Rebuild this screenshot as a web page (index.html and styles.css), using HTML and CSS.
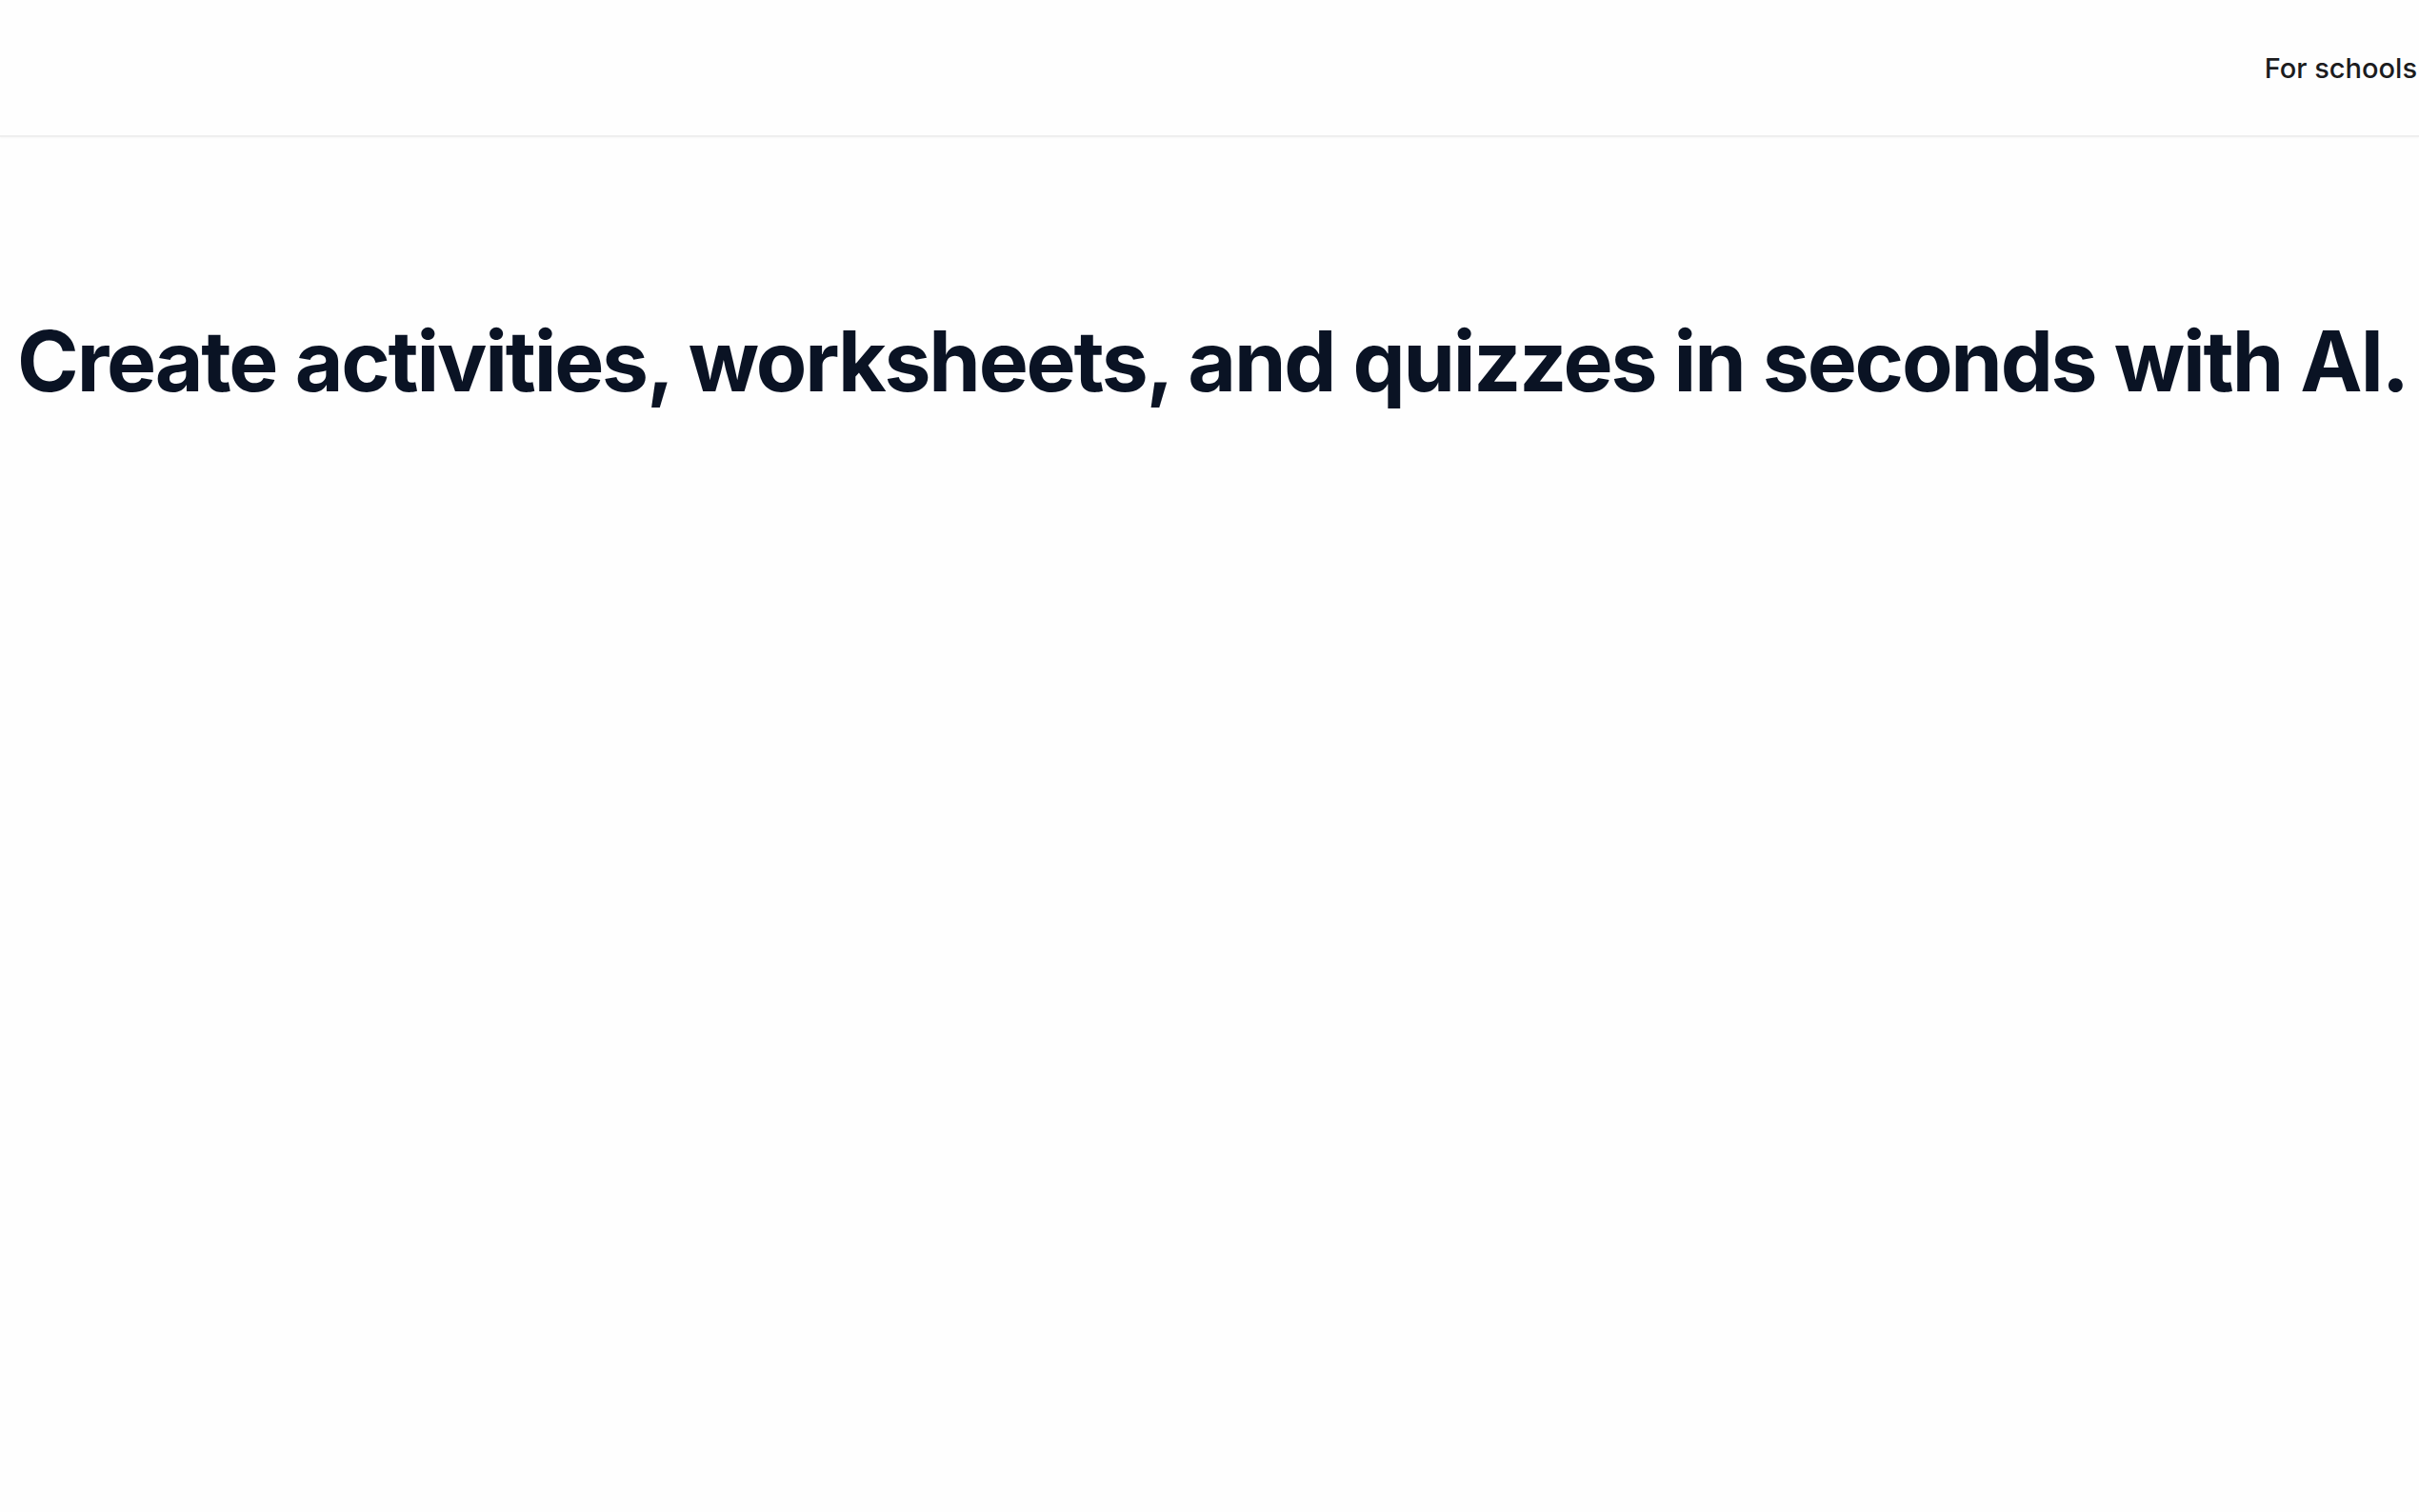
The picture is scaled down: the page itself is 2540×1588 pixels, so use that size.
FILE: index.html
```html
<!DOCTYPE html>
<html lang="en">
<head>
<meta charset="utf-8">
<title>Create activities with AI</title>
<link rel="stylesheet" href="styles.css">
</head>
<body>
<header class="site-header">
  <nav class="nav">
    <a class="nav-link" href="#">For schools</a>
  </nav>
</header>
<main class="hero">
  <h1 class="hero-title">Create activities, worksheets, and quizzes in seconds with AI.</h1>
</main>
</body>
</html>
```

FILE: styles.css
```css
html, body {
  margin: 0;
  padding: 0;
}
body {
  background: #fefefe;
  font-family: Inter, "Noto Sans", "Liberation Sans", sans-serif;
  color: #0b1220;
  min-height: 100vh;
  overflow: hidden;
}
.site-header {
  height: 142px;
  border-bottom: 2px solid #efefef;
  box-shadow: 0 1px 2px rgba(0,0,0,0.03);
  display: flex;
  align-items: center;
  justify-content: flex-end;
}
.nav {
  display: flex;
  align-items: center;
  margin-right: 2px;
}
.nav-link {
  font-size: 29px;
  font-weight: 500;
  color: #1c1c1e;
  text-decoration: none;
  white-space: nowrap;
}
.hero {
  padding-top: 191px;
  padding-left: 6px;
  display: flex;
  justify-content: center;
}
.hero-title {
  margin: 0;
  font-size: 87.5px;
  line-height: 88px;
  font-weight: 700;
  letter-spacing: -0.025em;
  word-spacing: 0.01em;
  color: #0a1324;
  white-space: nowrap;
  text-align: center;
}
```
